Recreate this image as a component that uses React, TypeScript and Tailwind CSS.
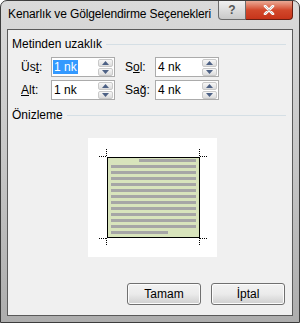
import React from "react";

const font = { fontFamily: '"Liberation Sans", Arial, sans-serif' };

const Spin = () => (
  <div className="flex flex-col gap-px w-[15px] h-[17px] mr-px">
    {[0, 1].map((i) => (
      <div
        key={i}
        className="flex-1 flex items-center justify-center border border-[#c9c9c9] rounded-[2px] bg-gradient-to-b from-[#f7f7f7] to-[#dcdcdc]"
      >
        <svg width="7" height="4" viewBox="0 0 7 4">
          {i === 0 ? (
            <path d="M0 4 L3.5 0 L7 4 Z" fill="#4d6185" />
          ) : (
            <path d="M0 0 L3.5 4 L7 0 Z" fill="#4d6185" />
          )}
        </svg>
      </div>
    ))}
  </div>
);

const Field = ({ value, selected }: { value: string; selected?: boolean }) => (
  <div className="flex items-center w-[64px] h-[20px] border border-[#ababab] bg-white">
    <div className="flex-1 pl-[1px] text-[12px] leading-[15px] text-black">
      <span className={selected ? "bg-[#3399ff] text-white px-px" : "px-px"}>{value}</span>
    </div>
    <Spin />
  </div>
);

const Label = ({ pre, u, post }: { pre: string; u: string; post: string }) => (
  <span className="text-[12px] leading-[15px] text-black">
    {pre}
    <span className="underline">{u}</span>
    {post}
  </span>
);

const Preview = () => {
  const lines = Array.from({ length: 13 }, (_, i) => i);
  return (
    <svg width="129" height="119" viewBox="0 0 129 119" className="block">
      <rect x="0" y="0" width="129" height="119" fill="#ffffff" />
      <rect x="19.5" y="19.5" width="92" height="80" fill="#d8e4bc" stroke="#000" />
      {lines.map((i) => {
        const x1 = i === 0 ? 51 : 23;
        const x2 = i === 12 ? 80 : 108;
        return <rect key={i} x={x1} y={21 + i * 6} width={x2 - x1} height="3" fill="#a6a6a6" />;
      })}
      <g stroke="#000" strokeDasharray="1 1" strokeWidth="1">
        <path d="M11 18.5 H19" />
        <path d="M18.5 11 V19" />
        <path d="M112 18.5 H120" />
        <path d="M111.5 11 V19" />
        <path d="M11 100.5 H19" />
        <path d="M18.5 100 V108" />
        <path d="M112 100.5 H120" />
        <path d="M111.5 100 V108" />
      </g>
    </svg>
  );
};

const Button = ({ children }: { children: React.ReactNode }) => (
  <button className="w-[74px] h-[22px] border border-[#707070] rounded-[3px] bg-gradient-to-b from-[#f2f2f2] via-[#ebebeb] to-[#cfcfcf] text-[12px] text-black shadow-[inset_0_0_0_1px_#fcfcfc]">
    {children}
  </button>
);

export default function App() {
  return (
    <div className="w-[300px] h-[323px] bg-white" style={font}>
      <div className="w-[300px] h-[323px] flex flex-col rounded-t-[7px] border border-[#3c3c3c] bg-gradient-to-b from-[#dadada] via-[#c6c6c6] to-[#adadad]">
        <div className="h-[28px] flex items-start justify-between pl-[7px]">
          <div className="mt-[6px] text-[12px] leading-[15px] tracking-[-0.12px] text-black whitespace-nowrap">Kenarlık ve Gölgelendirme Seçenekleri</div>
          <div className="flex mr-[6px]">
            <div className="w-[28px] h-[19px] flex items-center justify-center border border-[#6b6b6b] border-t-0 rounded-bl-[4px] bg-gradient-to-b from-[#f0f0f0] to-[#c9c9c9]">
              <span className="text-[12px] font-bold text-[#555] leading-none">?</span>
            </div>
            <div className="w-[47px] h-[19px] flex items-center justify-center border border-[#6b1e12] border-t-0 border-l-0 rounded-br-[4px] bg-gradient-to-b from-[#e9a995] via-[#d2482b] to-[#c7341a]">
              <svg width="12" height="10" viewBox="0 0 12 10">
                <path d="M2 1 L10 9 M10 1 L2 9" stroke="#ffffff" strokeWidth="2.6" strokeLinecap="round" />
                <path d="M2 1 L10 9 M10 1 L2 9" stroke="#444" strokeWidth="0.6" strokeLinecap="round" opacity="0.5" />
              </svg>
            </div>
          </div>
        </div>
        <div className="flex-1 mx-[6px] mb-[6px] border border-[#5a5a5a] bg-[#f0f0f0] flex flex-col">
          <div className="mt-[7px] ml-[4px] mr-[6px] flex items-center gap-[4px] text-[12px] leading-[15px] text-black">
            <span>Metinden uzaklık</span>
            <div className="flex-1 h-px bg-[#d5dfe5]" />
          </div>
          <div className="mt-[5px] ml-[13px] grid grid-cols-[30px_64px_10px_30px_64px] gap-y-[3px] items-center">
            <Label pre="Üs" u="t" post=":" />
            <Field value="1 nk" selected />
            <div />
            <Label pre="S" u="o" post="l:" />
            <Field value="4 nk" />
            <Label pre="" u="A" post="lt:" />
            <Field value="1 nk" />
            <div />
            <Label pre="Sa" u="ğ" post=":" />
            <Field value="4 nk" />
          </div>
          <div className="mt-[8px] ml-[4px] mr-[6px] flex items-center gap-[4px] text-[12px] leading-[15px] text-black">
            <span>Önizleme</span>
            <div className="flex-1 h-px bg-[#d5dfe5]" />
          </div>
          <div className="mt-[15px] ml-[80px]">
            <Preview />
          </div>
          <div className="mt-[26px] flex justify-end gap-[10px] mr-[7px]">
            <Button>Tamam</Button>
            <Button>İptal</Button>
          </div>
        </div>
      </div>
    </div>
  );
}
